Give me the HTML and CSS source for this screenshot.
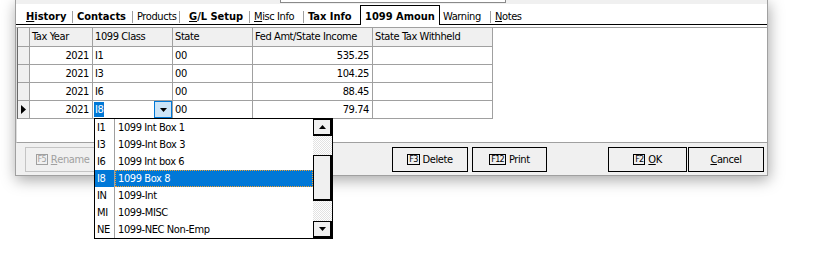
FILE: index.html
```html
<!DOCTYPE html>
<html>
	<head>
		<meta charset="utf-8">
		<title>1099 Amounts</title>
		<link rel="stylesheet" href="styles.css">
	</head>
	<body>
		<div class="page">
			<div class="window">
				<div class="topstrip"><div class="stub"></div></div>
				<ul class="tabs">
					<li class="tab t-history first bold"><u>H</u>istory</li>
					<li class="tab t-contacts bold">Contacts</li>
					<li class="tab t-products">Products</li>
					<li class="tab t-gl bold"><u>G</u>/L Setup</li>
					<li class="tab t-misc"><u>M</u>isc Info</li>
					<li class="tab t-tax bold">Tax Info</li>
					<li class="tab t-amounts active bold">1099 Amoun</li>
					<li class="tab t-warning first">Warning</li>
					<li class="tab t-notes"><u>N</u>otes</li>
				</ul>
				<div class="gap"></div>
				<div class="panel">
					<div class="grid">
						<div class="cell ind head"></div>
						<div class="cell head">Tax Year</div>
						<div class="cell head">1099 Class</div>
						<div class="cell head">State</div>
						<div class="cell head">Fed Amt/State Income</div>
						<div class="cell head">State Tax Withheld</div>

						<div class="cell ind"></div>
						<div class="cell num">2021</div>
						<div class="cell">I1</div>
						<div class="cell">00</div>
						<div class="cell num">535.25</div>
						<div class="cell"></div>

						<div class="cell ind"></div>
						<div class="cell num">2021</div>
						<div class="cell">I3</div>
						<div class="cell">00</div>
						<div class="cell num">104.25</div>
						<div class="cell"></div>

						<div class="cell ind"></div>
						<div class="cell num">2021</div>
						<div class="cell">I6</div>
						<div class="cell">00</div>
						<div class="cell num">88.45</div>
						<div class="cell"></div>

						<div class="cell ind cur">
							<svg width="5" height="9" viewBox="0 0 5 9"><path d="M0 0L5 4.5L0 9z" fill="#000"/></svg>
						</div>
						<div class="cell num">2021</div>
						<div class="cell combo">
							<span class="sel-text">I8</span>
							<span class="dd-btn">
								<svg width="7" height="4" viewBox="0 0 7 4"><path d="M0 0H7L3.5 4z" fill="#000"/></svg>
							</span>
						</div>
						<div class="cell">00</div>
						<div class="cell num">79.74</div>
						<div class="cell"></div>
					</div>
				</div>
				<div class="footer">
					<button class="btn b-rename disabled"><span class="key">F5</span><u>R</u>ename</button>
					<button class="btn b-delete"><span class="key">F3</span>Delete</button>
					<button class="btn b-print"><span class="key">F12</span>Print</button>
					<button class="btn b-ok"><span class="key">F2</span><u>O</u>K</button>
					<button class="btn b-cancel"><u>C</u>ancel</button>
				</div>
			</div>

			<div class="dropdown">
				<ul class="dd-list">
					<li class="item"><span class="code">I1</span><span class="desc">1099 Int Box 1</span></li>
					<li class="item"><span class="code">I3</span><span class="desc">1099-Int Box 3</span></li>
					<li class="item"><span class="code">I6</span><span class="desc">1099 Int box 6</span></li>
					<li class="item sel"><span class="code">I8</span><span class="desc">1099 Box 8</span></li>
					<li class="item"><span class="code">IN</span><span class="desc">1099-Int</span></li>
					<li class="item"><span class="code">MI</span><span class="desc">1099-MISC</span></li>
					<li class="item"><span class="code">NE</span><span class="desc">1099-NEC Non-Emp</span></li>
				</ul>
				<div class="sb">
					<div class="sb-btn"><svg width="7" height="4" viewBox="0 0 7 4"><path d="M0 4H7L3.5 0z" fill="#000"/></svg></div>
					<div class="sb-track"><div class="sb-thumb"></div></div>
					<div class="sb-btn"><svg width="7" height="4" viewBox="0 0 7 4"><path d="M0 0H7L3.5 4z" fill="#000"/></svg></div>
				</div>
			</div>
		</div>
	</body>
</html>
```

FILE: styles.css
```css
*{
	margin: 0;
	padding: 0;
	box-sizing: border-box;
}
ul{
	list-style: none;
}
body{
	background: #fff;
	font-family: Tahoma, "DejaVu Sans Condensed", "Liberation Sans", sans-serif;
	font-size: 11px;
	letter-spacing: -0.4px;
	color: #000;
	overflow: hidden;
}
.page{
	position: relative;
	width: 817px;
	height: 279px;
}
.window{
	margin-left: 15px;
	width: 753px;
	background: #fff;
	border: 1px solid #a0a0a0;
	border-top: 0;
	box-shadow: 1px 4px 14px rgba(0,0,0,.35);
}
.topstrip{
	height: 4px;
	background: #f0f0f0;
}
.stub{
	margin-left: 264px;
	width: 226px;
	height: 3px;
	border: 1px solid #8a8a8a;
	border-top: 0;
	background: #fff;
}

/* tabs */
.tabs{
	display: flex;
	align-items: flex-end;
	height: 21px;
	padding-left: 6px;
	border-bottom: 1px solid #000;
}
.tab{
	height: 12px;
	line-height: 12px;
	margin-bottom: 1px;
	padding-left: 4px;
	border-left: 1px solid #a0a0a0;
	white-space: nowrap;
	overflow: hidden;
}
.tab.first{
	border-left: 0;
}
.tab.bold{
	font-weight: bold;
	letter-spacing: 0;
}
.tab.active{
	height: 20px;
	margin-bottom: -1px;
	padding-top: 5px;
	border: 1px solid #000;
	border-bottom: 0;
	background: #fff;
}
.t-history{ width: 50px; }
.t-contacts{ width: 60px; }
.t-products{ width: 47px; }
.t-gl{ width: 70px; padding-left: 9px; }
.t-misc{ width: 54px; }
.t-tax{ width: 57px; }
.t-amounts{ width: 80px; }
.t-warning{ width: 50px; padding-left: 3px; }
.t-notes{ width: 35px; }

.gap{
	height: 2px;
}

/* grid */
.panel{
	height: 116px;
	border-top: 1px solid #a0a0a0;
	border-bottom: 1px solid #a0a0a0;
	border-left: 1px solid #dcdcdc;
}
.grid{
	display: grid;
	grid-template-columns: 12px 63px 80px 80px 120px 120px;
	width: 476px;
	border-left: 1px solid #696969;
}
.cell{
	height: 18px;
	line-height: 17px;
	padding: 0 2px;
	border-right: 1px solid #a0a0a0;
	border-bottom: 1px solid #a0a0a0;
	white-space: nowrap;
	overflow: hidden;
}
.cell.head{
	height: 19px;
	line-height: 18px;
	background: #f0f0f0;
}
.cell.ind{
	padding: 0;
	background: #f0f0f0;
}
.cell.cur{
	display: flex;
	align-items: center;
	padding-left: 3px;
}
.cell.num{
	text-align: right;
	padding-right: 3px;
}
.cell.combo{
	display: flex;
	padding: 0 0 0 1px;
}
.sel-text{
	height: 15px;
	line-height: 15px;
	margin-top: 1px;
	padding: 0 1px;
	background: #0078d7;
	color: #fff;
}
.dd-btn{
	margin-left: auto;
	width: 18px;
	height: 17px;
	border: 1px solid #0078d7;
	background: #cce4f7;
	display: flex;
	align-items: center;
	justify-content: center;
}

/* footer buttons */
.footer{
	display: flex;
	height: 32px;
	padding: 4px 0 0 9px;
	background: #f0f0f0;
}
.btn{
	height: 25px;
	border: 1px solid #000;
	background: #f0f0f0;
	display: flex;
	align-items: center;
	justify-content: center;
	font-family: inherit;
	font-size: 11px;
	letter-spacing: -0.4px;
	color: #000;
}
.btn.disabled{
	border-color: #c4c4c4;
	color: #a0a0a0;
}
.key{
	height: 11px;
	line-height: 9px;
	margin-right: 3px;
	padding: 0 1px;
	border: 1px solid #000;
	font-size: 9px;
	letter-spacing: -0.8px;
}
.btn.disabled .key{
	border-color: #a0a0a0;
}
.b-rename{ width: 75px; }
.b-delete{ margin-left: 292px; width: 76px; }
.b-print{ margin-left: 4px; width: 75px; }
.b-ok{ margin-left: 61px; width: 79px; }
.b-cancel{ margin-left: 1px; width: 76px; }

/* dropdown list */
.dropdown{
	position: absolute;
	left: 94px;
	top: 118px;
	width: 239px;
	height: 121px;
	border: 1px solid #000;
	background: #fff;
	display: flex;
}
.dd-list{
	width: 218px;
}
.item{
	display: flex;
	height: 17px;
	line-height: 17px;
	white-space: nowrap;
}
.item .code{
	width: 20px;
	padding-left: 2px;
	border-right: 1px solid #a0a0a0;
}
.item .desc{
	flex: 1;
	padding-left: 3px;
}
.item.sel{
	background: #0078d7;
	color: #fff;
}
.item.sel .desc{
	outline: 1px dotted #f0a030;
	outline-offset: -1px;
}
.sb{
	width: 19px;
	display: flex;
	flex-direction: column;
}
.sb-btn{
	height: 17px;
	border: 1px solid #000;
	border-right-width: 2px;
	border-bottom-width: 2px;
	background: #f0f0f0;
	display: flex;
	align-items: center;
	justify-content: center;
}
.sb-track{
	flex: 1;
	background: repeating-conic-gradient(#e2e2e2 0 25%, #fff 0 50%) 0 0/2px 2px;
}
.sb-thumb{
	margin-top: 19px;
	height: 46px;
	border: 1px solid #000;
	border-right-width: 2px;
	border-bottom-width: 2px;
	background: #f0f0f0;
}
```
